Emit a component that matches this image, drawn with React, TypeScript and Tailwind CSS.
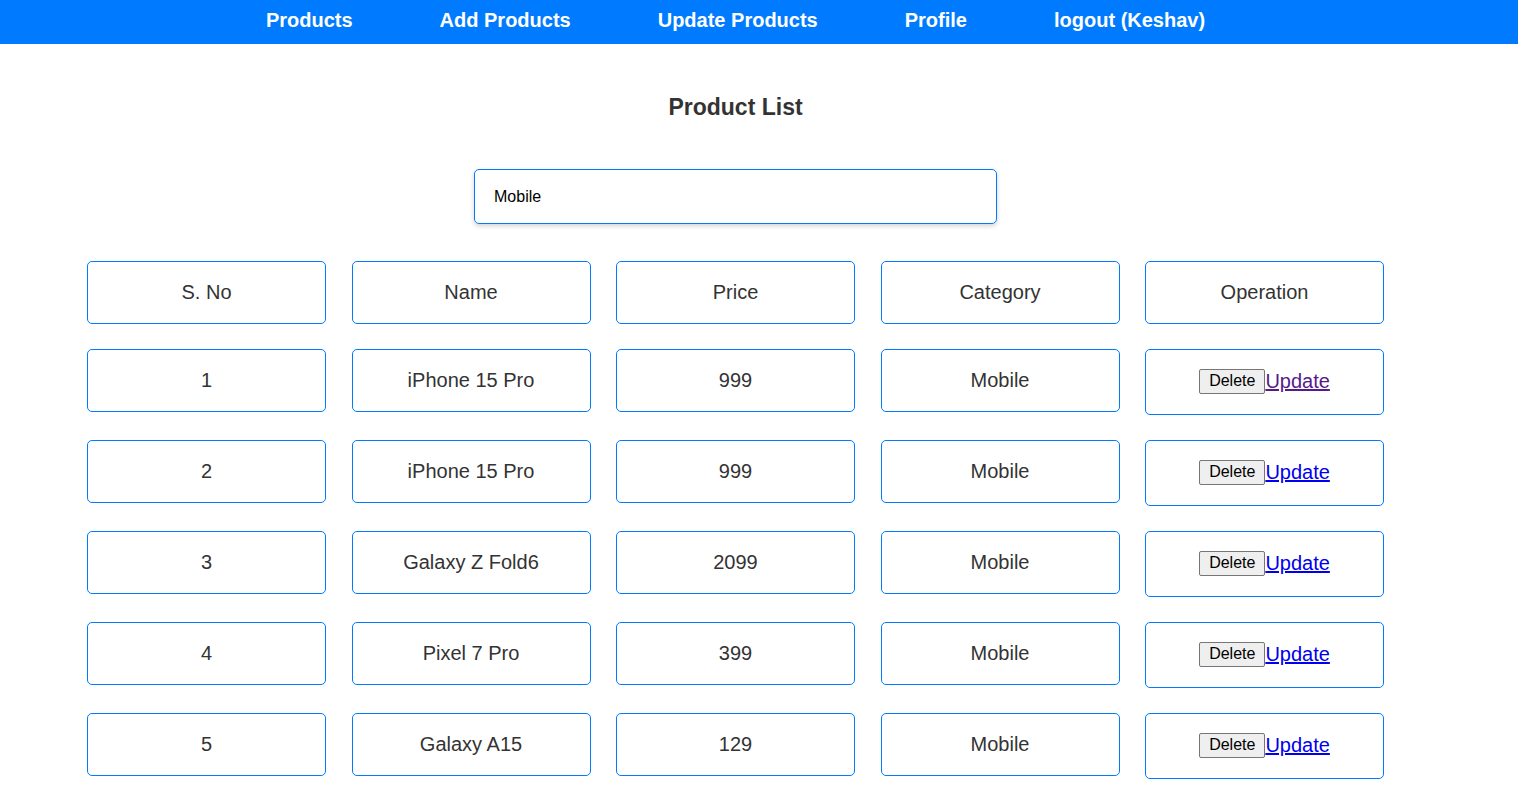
import React from 'react';

const products = [
  { id: 1, name: 'iPhone 15 Pro', price: 999, category: 'Mobile' },
  { id: 2, name: 'iPhone 15 Pro', price: 999, category: 'Mobile' },
  { id: 3, name: 'Galaxy Z Fold6', price: 2099, category: 'Mobile' },
  { id: 4, name: 'Pixel 7 Pro', price: 399, category: 'Mobile' },
  { id: 5, name: 'Galaxy A15', price: 129, category: 'Mobile' },
];

const navItems = ['Products', 'Add Products', 'Update Products', 'Profile', 'logout (Keshav)'];

const cell = 'h-[63px] pb-[2px] flex items-center justify-center border border-[#007bff] rounded-[5px] text-[20px] text-[#333]';

export default function App() {
  return (
    <div className="min-h-screen bg-white font-['Liberation_Sans',Arial,sans-serif]">
      {/* Nav */}
      <div className="h-[44px] bg-[#007bff]">
        <ul className="w-[1471px] h-full pb-[4px] flex items-center justify-center gap-[87px]">
          {navItems.map(item => (
            <li key={item} className="text-white text-[20px] font-bold leading-none">
              {item}
            </li>
          ))}
        </ul>
      </div>

      <div className="w-[1471px] flex flex-col items-center">
        <h3 className="mt-[50px] text-[23px] leading-[26px] font-bold text-[#333]">Product List</h3>

        <input
          type="text"
          defaultValue="Mobile"
          className="mt-[49px] w-[523px] h-[55px] border border-[#007bff] rounded-[5px] pl-[19px] text-[16px] text-black outline-none shadow-[0_2px_5px_rgba(0,0,0,0.18)]"
        />

        {/* Table */}
        <div className="mt-[37px] grid grid-cols-[repeat(5,239px)] gap-x-[25.5px] gap-y-[25px] items-start">
          {['S. No', 'Name', 'Price', 'Category', 'Operation'].map(h => (
            <div key={h} className={cell}>{h}</div>
          ))}
          {products.map((p, i) => (
            <React.Fragment key={p.id}>
              <div className={cell}>{i + 1}</div>
              <div className={cell}>{p.name}</div>
              <div className={cell}>{p.price}</div>
              <div className={cell}>{p.category}</div>
              <div className="h-[66px] pb-[2px] flex items-center justify-center border border-[#007bff] rounded-[5px]">
                <button className="h-[25px] px-[9px] bg-[#efefef] border border-[#767676] rounded-[2px] text-[16px] leading-[18px] text-black">
                  Delete
                </button>
                <a
                  href="#"
                  className={`text-[20px] underline ${i === 0 ? 'text-[#551a8b]' : 'text-[#0000ee]'}`}
                >
                  Update
                </a>
              </div>
            </React.Fragment>
          ))}
        </div>
      </div>
    </div>
  );
}
